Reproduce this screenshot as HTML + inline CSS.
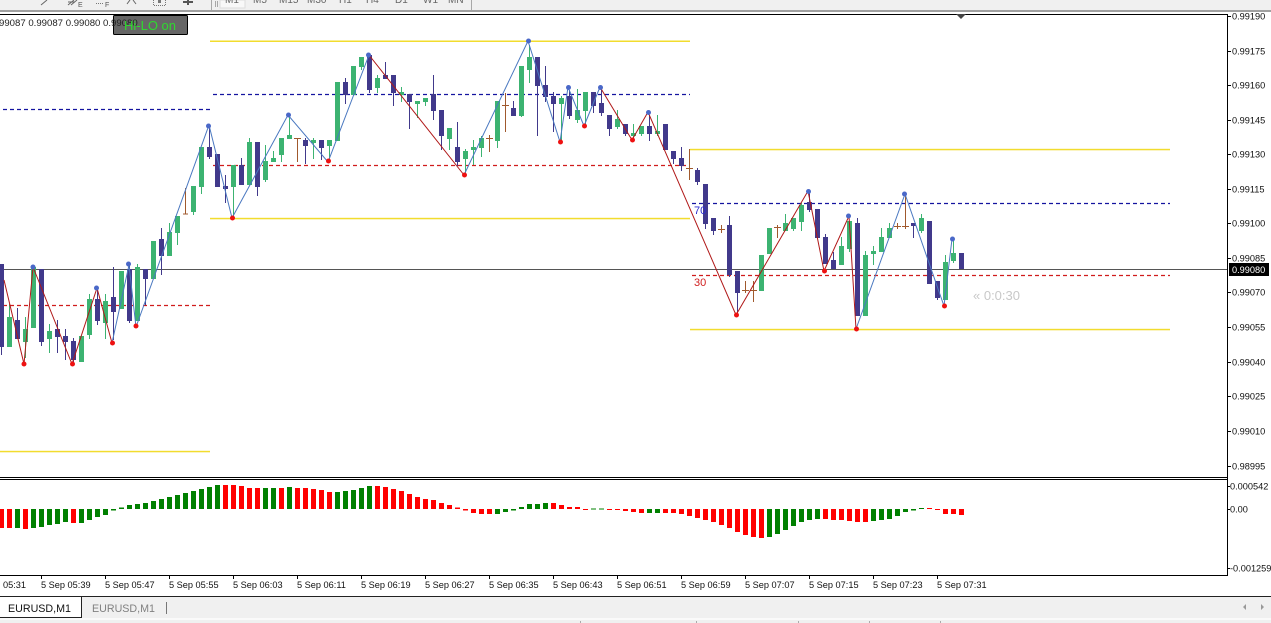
<!DOCTYPE html>
<html><head><meta charset="utf-8"><style>
html,body{margin:0;padding:0;width:1271px;height:623px;overflow:hidden;background:#fff}
svg{display:block;font-family:"Liberation Sans",sans-serif}
text{font-size:9.2px;fill:#111}
</style></head><body>
<svg width="1271" height="623" viewBox="0 0 1271 623" xmlns="http://www.w3.org/2000/svg">
<rect width="1271" height="623" fill="#fff"/>
<!-- toolbar -->
<rect width="1271" height="11" fill="#f0f0f0"/>
<rect y="10" width="1271" height="2" fill="#a0a0a0"/>
<rect x="220" y="0" width="25" height="8" fill="#f8f8f8" stroke="#ddd"/>
<path d="M211.5 0V10M471.5 0V10M215.5 1V7M217.5 1V7" stroke="#a8a8a8" fill="none"/>
<g>
<text x="225" y="3" style="fill:#666;font-size:10px">M1</text><text x="253" y="3" style="fill:#666;font-size:10px">M5</text><text x="279" y="3" style="fill:#666;font-size:10px">M15</text><text x="307" y="3" style="fill:#666;font-size:10px">M30</text><text x="339" y="3" style="fill:#666;font-size:10px">H1</text><text x="366" y="3" style="fill:#666;font-size:10px">H4</text><text x="395" y="3" style="fill:#666;font-size:10px">D1</text><text x="423" y="3" style="fill:#666;font-size:10px">W1</text><text x="448" y="3" style="fill:#666;font-size:10px">MN</text>
</g>
<path d="M41 5L47 0M68 5L74 0M71 5L77 0M68 2H75" stroke="#666" fill="none"/>
<text x="78" y="7" style="font-size:7px;fill:#555">E</text>
<path d="M96 3.5H104" stroke="#777" stroke-dasharray="1 1" fill="none"/>
<text x="105" y="7" style="font-size:7px;fill:#555">F</text>
<path d="M127 4L130 0M133 0L136 4" stroke="#666" fill="none"/>
<path d="M153.5 0V5.5H165.5V0" stroke="#777" stroke-dasharray="1 1" fill="none"/>
<rect x="158" y="0" width="3" height="3" fill="#777"/>
<path d="M183 2H193M188 0V5" stroke="#555" stroke-width="2" fill="none"/>
<!-- levels -->
<g fill="#f2dc2e">
<rect x="210" y="40.500" width="480" height="1.500"/>
<rect x="210" y="217.800" width="480" height="1.500"/>
<rect x="690" y="148.800" width="480" height="1.500"/>
<rect x="690" y="328.800" width="480" height="1.500"/>
<rect x="0" y="450.800" width="210" height="1.500"/>
</g>
<path d="M3 109.500H210M213 94.500H690M692 203.500H1170" stroke="#1414a0" stroke-width="1.300" stroke-dasharray="4 3" fill="none"/>
<path d="M3 305.500H210M213 165.500H690M692 275.500H1170" stroke="#d01c1c" stroke-width="1.300" stroke-dasharray="4 3" fill="none"/>
<!-- main frames -->
<g shape-rendering="crispEdges">
<path d="M0 14.5H1227.5V477.5H0M0 479.5H1227.5V575.5H0M1227.5 14V576" stroke="#000" fill="none"/>
<path d="M1227 16.5h4M1227 51.5h4M1227 85.5h4M1227 120.5h4M1227 154.5h4M1227 189.5h4M1227 223.5h4M1227 258.5h4M1227 292.5h4M1227 327.5h4M1227 362.5h4M1227 396.5h4M1227 431.5h4M1227 466.5h4M1227 486.5h3M1227 509.5h3M1227 568.5h3" stroke="#000" fill="none"/>
<path d="M41.5 575v4M105.5 575v4M169.5 575v4M233.5 575v4M297.5 575v4M361.5 575v4M425.5 575v4M489.5 575v4M553.5 575v4M617.5 575v4M681.5 575v4M745.5 575v4M809.5 575v4M873.5 575v4M937.5 575v4" stroke="#000" fill="none"/>
<path d="M0 269.5H1227" stroke="#555" fill="none"/>
<!-- wicks -->
<path fill="none" stroke="#3cb371" d="M9.5 304V347M25.5 317V358M49.5 324V353M89.5 294V339M105.5 294V339M137.5 264V321M169.5 223V256M177.5 216V245M193.5 186V215M201.5 147V194M233.5 165V216M249.5 138V185M265.5 145V182M273.5 151V162M281.5 138V162M289.5 115V139M313.5 138V159M329.5 140V163M361.5 57V70M377.5 75V93M401.5 87V102M417.5 101V118M425.5 98V106M449.5 128V150M465.5 149V173M473.5 140V165M481.5 136V157M497.5 101V148M521.5 66V117M529.5 45V83M561.5 96V140M577.5 89V123M585.5 92V125M617.5 110V129M633.5 124V142M641.5 126V136M657.5 115V136M785.5 214V231M793.5 218V231M801.5 203V231M841.5 237V265M849.5 221V252M865.5 251V316M873.5 246V265M881.5 228V252M889.5 223V238M921.5 214V233M945.5 255V300M953.5 240V263"/>
<path fill="none" stroke="#41398b" d="M1.5 264V355M17.5 308V339M41.5 269V346M57.5 320V353M65.5 329V360M73.5 338V363M97.5 289V325M113.5 267V340M129.5 263V323M145.5 269V305M161.5 228V275M209.5 124V159M225.5 175V203M241.5 158V185M257.5 142V196M305.5 138V164M321.5 140V160M345.5 78V104M369.5 55V93M385.5 62V79M393.5 75V106M409.5 94V129M433.5 75V120M441.5 110V150M457.5 122V166M513.5 101V116M537.5 57V136M545.5 66V102M553.5 92V132M569.5 90V119M593.5 92V113M601.5 90V116M609.5 115V136M625.5 124V136M649.5 115V141M673.5 151V164M681.5 147V171M697.5 168V185M705.5 184V229M713.5 218V235M729.5 216V277M737.5 271V315M809.5 192V212M825.5 234V264M833.5 252V269M857.5 218V316M913.5 223V238M937.5 281V300"/>
<path fill="none" stroke="#a0592d" d="M185.5 188V214M183 214H188M297.5 138V162M294 138.5H301M489.5 135V152M486 138.5H493M505.5 93V132M502 105.5H509M689.5 149V180M686 168.5H693M721.5 225V233M718 229.5H725M745.5 281V293M742 290.5H749M753.5 281V302M750 290.5H757M777.5 225V238M774 227.5H781M897.5 223V229M894 226.5H901M905.5 194V229M902 226.5H909"/>
<!-- bodies -->
<path fill="none" stroke="#3cb371" stroke-width="5" d="M9.5 317V347M25.5 329V342M33.5 267V328M49.5 331V339M81.5 336V362M89.5 299V335M105.5 301V323M121.5 271V309M137.5 267V321M153.5 241V279M169.5 232V256M177.5 216V233M193.5 186V212M201.5 147V187M233.5 165V187M249.5 142V185M265.5 161V180M273.5 158V162M281.5 138V155M289.5 135V139M313.5 140V143M329.5 140V146M337.5 82V141M353.5 66V95M361.5 57V67M377.5 78V88M401.5 92V95M417.5 101V104M425.5 98V102M449.5 128V139M465.5 151V159M473.5 147V150M481.5 138V148M497.5 101V141M521.5 66V116M529.5 57V70M561.5 98V104M577.5 110V120M585.5 92V111M617.5 119V127M633.5 133V136M641.5 126V134M657.5 131V134M761.5 255V291M769.5 228V254M785.5 223V231M793.5 218V229M801.5 205V222M841.5 246V265M849.5 221V249M865.5 255V316M873.5 251V254M881.5 237V252M889.5 228V238M921.5 218V231M945.5 262V300M953.5 253V261"/>
<path fill="none" stroke="#41398b" stroke-width="5" d="M1.5 264V347M17.5 320V339M41.5 269V342M57.5 329V337M65.5 336V342M73.5 341V360M97.5 299V321M113.5 297V312M129.5 269V321M145.5 269V279M161.5 239V256M209.5 147V157M217.5 154V187M225.5 186V189M241.5 165V185M257.5 142V187M305.5 140V146M321.5 140V148M345.5 82V95M369.5 55V90M385.5 75V79M393.5 75V93M409.5 94V102M433.5 94V111M441.5 110V136M457.5 147V162M513.5 108V116M537.5 57V86M545.5 85V97M553.5 96V104M569.5 96V116M593.5 92V106M601.5 103V113M609.5 115V129M625.5 124V134M649.5 126V134M665.5 124V150M673.5 151V159M681.5 158V166M697.5 170V182M705.5 184V224M713.5 218V231M729.5 225V275M737.5 271V293M809.5 202V210M817.5 209V238M825.5 237V264M833.5 260V269M857.5 223V316M913.5 223V226M929.5 221V284M937.5 281V298M961.5 253V269"/>
<!-- histogram -->
<path fill="none" stroke="#ff0000" stroke-width="5" d="M1.5 509V528M9.5 509V528M25.5 509V529M73.5 509V523M225.5 485V509M233.5 485V509M241.5 486V509M249.5 488V509M257.5 488V509M281.5 488V509M297.5 488V509M305.5 488V509M313.5 489V509M321.5 490V509M329.5 492V509M377.5 486V509M385.5 487V509M393.5 489V509M401.5 491V509M409.5 494V509M417.5 497V509M425.5 499V509M433.5 500V509M441.5 503V509M449.5 505V509M457.5 507.5V509M465.5 509V510.5M473.5 509V513M481.5 509V514M489.5 509V514M553.5 503V509M561.5 505V509M569.5 507V509M577.5 507V509M585.5 509V510M609.5 509V510M617.5 509V510M625.5 509V511M633.5 509V512M641.5 509V513M665.5 509V513M673.5 509V513M681.5 509V514M689.5 509V516M697.5 509V518M705.5 509V520M713.5 509V522M721.5 509V525M729.5 509V528M737.5 509V532M745.5 509V535M753.5 509V537M761.5 509V538M825.5 509V519M833.5 509V520M841.5 509V520M849.5 509V521M857.5 509V522M865.5 509V522M929.5 508V509M937.5 509V510M945.5 509V514M953.5 509V514M961.5 509V515"/>
<path fill="none" stroke="#008000" stroke-width="5" d="M17.5 509V528M33.5 509V528M41.5 509V527M49.5 509V525M57.5 509V524M65.5 509V522M81.5 509V523M89.5 509V520M97.5 509V517M105.5 509V515M113.5 509V510.5M121.5 507.5V509M129.5 505V509M137.5 504V509M145.5 503V509M153.5 501V509M161.5 499V509M169.5 497V509M177.5 495V509M185.5 493V509M193.5 491V509M201.5 489V509M209.5 487V509M217.5 485V509M265.5 488V509M273.5 488V509M289.5 487V509M337.5 492V509M345.5 491V509M353.5 490V509M361.5 488V509M369.5 486V509M497.5 509V514M505.5 509V512M513.5 509V510.5M521.5 507V509M529.5 504V509M537.5 504V509M545.5 503V509M593.5 508.5V509.5M601.5 508.5V509.5M649.5 509V513M657.5 509V513M769.5 509V537M777.5 509V534M785.5 509V530M793.5 509V526M801.5 509V522M809.5 509V520M817.5 509V519M873.5 509V521M881.5 509V520M889.5 509V519M897.5 509V516M905.5 509V512M913.5 509V510.5M921.5 508V509"/>
</g>
<!-- zigzag -->
<path fill="none" stroke="#b01818" d="M4 280L24 364L33 267L72 364L97 288L112 343M369 55L464 175M600 87L632 140L648 112L736 315L808 191L824 271L849 216L856 329"/>
<path fill="none" stroke="#4a78c0" d="M112 343L129 265L136 327L209 125L232 218L288 115L328 162L369 55M464 175L528 41L560 142L568 87L584 126L600 87M856 329L905 194L944 306L952 239"/>
<g fill="#ee1111"><circle cx="24" cy="364" r="2.5"/><circle cx="72.500" cy="364" r="2.5"/><circle cx="112.500" cy="343" r="2.5"/><circle cx="136" cy="326" r="2.5"/><circle cx="232.500" cy="218" r="2.5"/><circle cx="328.500" cy="161" r="2.5"/><circle cx="464.500" cy="175" r="2.5"/><circle cx="560.500" cy="142" r="2.5"/><circle cx="584.500" cy="126" r="2.5"/><circle cx="632.500" cy="140" r="2.5"/><circle cx="736.500" cy="315" r="2.5"/><circle cx="824.500" cy="271" r="2.5"/><circle cx="856.500" cy="329" r="2.5"/><circle cx="944.500" cy="306" r="2.5"/></g>
<g fill="#4a68c8"><circle cx="33" cy="267" r="2.5"/><circle cx="96.500" cy="288" r="2.500"/><circle cx="128.500" cy="264" r="2.500"/><circle cx="208.500" cy="126" r="2.500"/><circle cx="288.500" cy="115" r="2.500"/><circle cx="368.500" cy="55" r="2.500"/><circle cx="528.500" cy="41" r="2.500"/><circle cx="568.500" cy="87.500" r="2.500"/><circle cx="600.500" cy="87.500" r="2.500"/><circle cx="648.500" cy="112.500" r="2.500"/><circle cx="808.500" cy="191.500" r="2.500"/><circle cx="848.500" cy="216" r="2.500"/><circle cx="904.500" cy="194" r="2.500"/><circle cx="952.500" cy="239" r="2.500"/></g>
<!-- overlays -->
<rect x="113.500" y="15.500" width="74" height="19" rx="1" fill="#666" stroke="#000"/>
<text x="-1" y="26" style="font-size:9.600px;fill:#222">99087 0.99087 0.99080 0.99080</text>
<text x="124" y="30" style="font-size:13px;fill:#2fd92f">Hi-LO on</text>
<text x="694" y="214" style="font-size:11px;fill:#2a2ad0">70</text>
<text x="694" y="286" style="font-size:11px;fill:#d02020">30</text>
<text x="973" y="300" style="font-size:13px;fill:#c8c8c8">« 0:0:30</text>
<path d="M956 14H966L961 19Z" fill="#444"/>
<!-- price axis -->
<text x="1232" y="19.500">0.99190</text><text x="1232" y="54.500">0.99175</text><text x="1232" y="88.500">0.99160</text><text x="1232" y="123.500">0.99145</text><text x="1232" y="157.500">0.99130</text><text x="1232" y="192.500">0.99115</text><text x="1232" y="226.500">0.99100</text><text x="1232" y="261.500">0.99085</text><text x="1232" y="295.500">0.99070</text><text x="1232" y="330.500">0.99055</text><text x="1232" y="365.500">0.99040</text><text x="1232" y="399.500">0.99025</text><text x="1232" y="434.500">0.99010</text><text x="1232" y="469.500">0.98995</text>
<rect x="1229" y="263" width="40" height="13" fill="#000"/>
<text x="1232" y="273" style="fill:#fff">0.99080</text>
<text x="1230" y="489.500">0.000542</text><text x="1230" y="512.500">0.00</text><text x="1230" y="571.500">-0.001259</text>
<!-- time axis -->
<text x="3" y="588">05:31</text><text x="41" y="588">5 Sep 05:39</text><text x="105" y="588">5 Sep 05:47</text><text x="169" y="588">5 Sep 05:55</text><text x="233" y="588">5 Sep 06:03</text><text x="297" y="588">5 Sep 06:11</text><text x="361" y="588">5 Sep 06:19</text><text x="425" y="588">5 Sep 06:27</text><text x="489" y="588">5 Sep 06:35</text><text x="553" y="588">5 Sep 06:43</text><text x="617" y="588">5 Sep 06:51</text><text x="681" y="588">5 Sep 06:59</text><text x="745" y="588">5 Sep 07:07</text><text x="809" y="588">5 Sep 07:15</text><text x="873" y="588">5 Sep 07:23</text><text x="937" y="588">5 Sep 07:31</text>
<!-- tabs -->
<rect y="597" width="1271" height="26" fill="#f0f0f0"/>
<rect y="596" width="1271" height="1" fill="#222"/>
<rect y="618" width="1271" height="2" fill="#fafafa"/>
<rect x="0" y="597" width="81" height="20" fill="#fff"/>
<path d="M81.500 597V617.500H0" fill="none" stroke="#222"/>
<text x="8" y="612" style="font-size:10.700px;fill:#111">EURUSD,M1</text>
<text x="92" y="612" style="font-size:10.700px;fill:#808080">EURUSD,M1</text>
<rect x="166" y="602" width="1" height="12" fill="#777"/>
<path d="M1246 604V610L1243 607ZM1261 604V610L1264 607Z" fill="#999"/>
<path d="M580.500 621V623M696.500 621V623M798.500 621V623M869.500 621V623M940.500 621V623" stroke="#aaa"/>
</svg>
</body></html>
